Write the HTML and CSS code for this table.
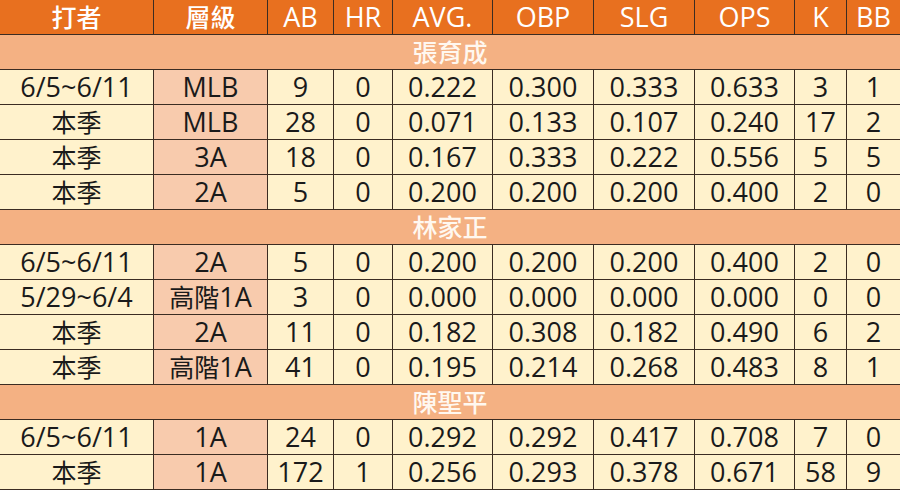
FILE: index.html
```html
<!DOCTYPE html>
<html lang="zh-Hant">
<head>
<meta charset="utf-8">
<link rel="stylesheet" href="styles.css">
</head>
<body>
<table class="stats">
<colgroup>
<col class="c-name"><col class="c-lvl"><col class="c-ab"><col class="c-hr"><col class="c-avg"><col class="c-obp"><col class="c-slg"><col class="c-ops"><col class="c-k"><col class="c-bb">
</colgroup>
<thead>
<tr class="head"><th><span class="zh">打者</span></th><th><span class="zh">層級</span></th><th>AB</th><th>HR</th><th>AVG.</th><th>OBP</th><th>SLG</th><th>OPS</th><th>K</th><th>BB</th></tr>
</thead>
<tbody>
<tr class="group"><td colspan="10"><span class="zh">張育成</span></td></tr>
<tr><td>6/5~6/11</td><td class="lvl">MLB</td><td>9</td><td>0</td><td>0.222</td><td>0.300</td><td>0.333</td><td>0.633</td><td>3</td><td>1</td></tr>
<tr><td><span class="zh">本季</span></td><td class="lvl">MLB</td><td>28</td><td>0</td><td>0.071</td><td>0.133</td><td>0.107</td><td>0.240</td><td>17</td><td>2</td></tr>
<tr><td><span class="zh">本季</span></td><td class="lvl">3A</td><td>18</td><td>0</td><td>0.167</td><td>0.333</td><td>0.222</td><td>0.556</td><td>5</td><td>5</td></tr>
<tr><td><span class="zh">本季</span></td><td class="lvl">2A</td><td>5</td><td>0</td><td>0.200</td><td>0.200</td><td>0.200</td><td>0.400</td><td>2</td><td>0</td></tr>
<tr class="group"><td colspan="10"><span class="zh">林家正</span></td></tr>
<tr><td>6/5~6/11</td><td class="lvl">2A</td><td>5</td><td>0</td><td>0.200</td><td>0.200</td><td>0.200</td><td>0.400</td><td>2</td><td>0</td></tr>
<tr><td>5/29~6/4</td><td class="lvl"><span class="zh">高階</span>1A</td><td>3</td><td>0</td><td>0.000</td><td>0.000</td><td>0.000</td><td>0.000</td><td>0</td><td>0</td></tr>
<tr><td><span class="zh">本季</span></td><td class="lvl">2A</td><td>11</td><td>0</td><td>0.182</td><td>0.308</td><td>0.182</td><td>0.490</td><td>6</td><td>2</td></tr>
<tr><td><span class="zh">本季</span></td><td class="lvl"><span class="zh">高階</span>1A</td><td>41</td><td>0</td><td>0.195</td><td>0.214</td><td>0.268</td><td>0.483</td><td>8</td><td>1</td></tr>
<tr class="group"><td colspan="10"><span class="zh">陳聖平</span></td></tr>
<tr><td>6/5~6/11</td><td class="lvl">1A</td><td>24</td><td>0</td><td>0.292</td><td>0.292</td><td>0.417</td><td>0.708</td><td>7</td><td>0</td></tr>
<tr><td><span class="zh">本季</span></td><td class="lvl">1A</td><td>172</td><td>1</td><td>0.256</td><td>0.293</td><td>0.378</td><td>0.671</td><td>58</td><td>9</td></tr>
</tbody>
</table>
</body>
</html>
```

FILE: styles.css
```css
html, body {
  margin: 0;
  padding: 0;
  background: #ffffff;
}

.stats {
  width: 901px;
  table-layout: fixed;
  border-collapse: collapse;
  font-family: "Open Sans", "Noto Sans CJK TC", sans-serif;
  font-size: 27px;
  color: #1a1a1a;
  margin-left: -1px;
}

.zh {
  font-family: "Noto Sans CJK TC", sans-serif;
  font-size: 25px;
  line-height: 30px;
}

.c-name { width: 154px; }
.c-lvl { width: 114px; }
.c-ab { width: 66px; }
.c-hr { width: 59px; }
.c-avg { width: 100px; }
.c-obp { width: 101px; }
.c-slg { width: 101px; }
.c-ops { width: 100px; }
.c-k { width: 52px; }
.c-bb { width: 54px; }

.stats th,
.stats td {
  height: 34px;
  padding: 0;
  text-align: center;
  vertical-align: middle;
  border: 1px solid #3b2c22;
  line-height: 32px;
  white-space: nowrap;
}

.stats td {
  background: #fff2cc;
}

.stats td.lvl {
  background: #f8cbad;
}

.head th {
  background: #e8701f;
  color: #ffffff;
  font-weight: 500;
  border-top: none;
}

.group td {
  background: #f4b183;
  color: #fff8f0;
  font-weight: 500;
}
```
